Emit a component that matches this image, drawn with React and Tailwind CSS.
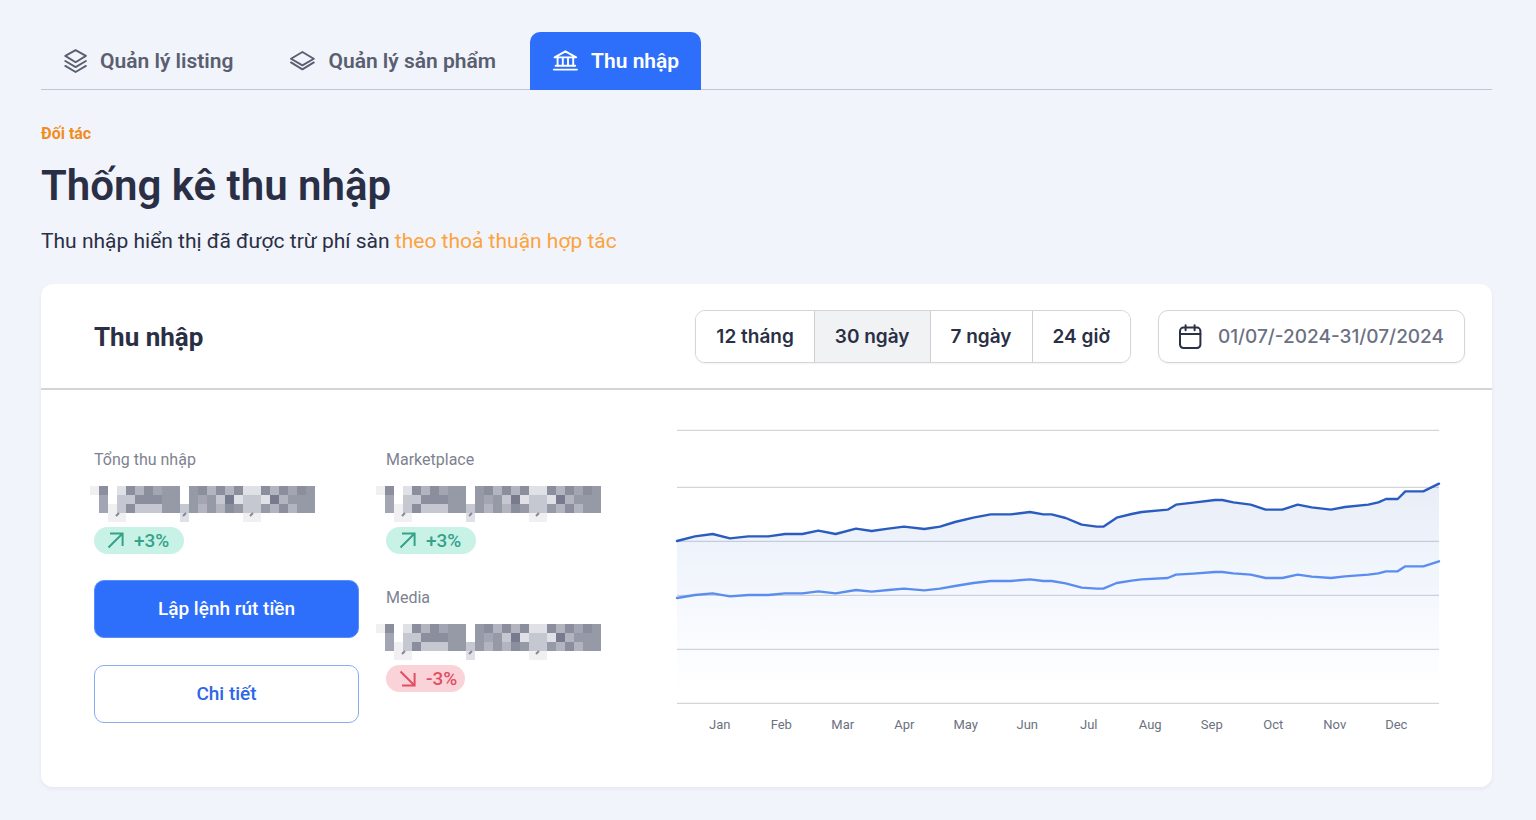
import { useState } from 'react';

const PERIODS = ['12 tháng', '30 ngày', '7 ngày', '24 giờ'];
const MONTHS = ['Jan', 'Feb', 'Mar', 'Apr', 'May', 'Jun', 'Jul', 'Aug', 'Sep', 'Oct', 'Nov', 'Dec'];

// Chart space is 2286 x 822 units, stretched to the available width
const CHART_W = 2286;
const CHART_H = 822;
const GRID_LINES = [1, 172, 334, 496, 658, 820];

const TOTAL = [
  [0, 333], [54, 319], [107, 312], [159, 325], [214, 319], [274, 319], [324, 312], [376, 312],
  [424, 302], [476, 312], [537, 296], [584, 303], [634, 296], [681, 290], [742, 297], [789, 290],
  [834, 276], [889, 263], [941, 253], [1001, 253], [1059, 246], [1099, 253], [1124, 253],
  [1166, 264], [1214, 284], [1259, 290], [1279, 290], [1319, 263], [1364, 252], [1394, 246],
  [1472, 239], [1497, 224], [1549, 218], [1614, 210], [1636, 210], [1669, 217], [1721, 224],
  [1766, 239], [1816, 239], [1862, 224], [1904, 232], [1962, 239], [2004, 231], [2074, 224],
  [2104, 217], [2127, 207], [2162, 207], [2185, 184], [2239, 184], [2286, 161],
];
const MARKETPLACE = TOTAL.map(([x, y]) => [x, Math.round(292 + y * 0.636)]);

const toPoints = (data) => data.map((p) => p.join(',')).join(' ');

// Hidden amounts: one letter per cell, from light (a) to dark (h)
const SHADES = {
  a: '#f0f0f2', b: '#e0e1e6', c: '#c6c8d1', d: '#b2b4bf',
  e: '#a3a6b2', f: '#969aa7', g: '#8b8e9c', h: '#787b8d',
};
const MASK = [
  'ag.bgdgeff.fgdgdgbbgdgegf',
  '.e.ccgggff.fefchbccbhdfff',
  '.eacgcccffcfdfdgfccfdgdff',
  '..aa......b......aa......',
];

function StackIcon() {
  return (
    <svg width="24" height="24" viewBox="0 0 24 24" fill="none" stroke="currentColor" strokeWidth="1.9" strokeLinejoin="round" strokeLinecap="round" aria-hidden="true">
      <path d="M12.6 1.2 22.9 6.9 12.6 13.2 2.3 6.9Z" />
      <path d="M2.3 12 12.6 18.1 22.9 12" />
      <path d="M2.3 16.9 12.6 23 22.9 16.9" />
    </svg>
  );
}

function LayerIcon() {
  return (
    <svg width="26" height="24" viewBox="0 0 26 24" fill="none" stroke="currentColor" strokeWidth="1.9" strokeLinejoin="round" strokeLinecap="round" aria-hidden="true">
      <path d="M13.4 3 24.8 9.8 13.4 16.4 2 9.8Z" />
      <path d="M2 13.4 13.4 20.4 24.8 13.4" />
    </svg>
  );
}

function BankIcon() {
  return (
    <svg width="26" height="24" viewBox="0 0 26 24" fill="none" stroke="currentColor" strokeWidth="1.9" strokeLinejoin="round" strokeLinecap="round" aria-hidden="true">
      <path d="M13.4 2.3 24.2 8.4H2.6Z" />
      <path d="M5.6 8.6v8M10.8 8.6v8M16 8.6v8M21.2 8.6v8" />
      <path d="M3.6 16.8h19.6M1.8 20.6h23.2" />
    </svg>
  );
}

function CalendarIcon() {
  return (
    <svg width="24" height="26" viewBox="0 0 24 26" fill="none" stroke="currentColor" strokeWidth="2" strokeLinejoin="round" strokeLinecap="round" aria-hidden="true">
      <rect x="1" y="3.6" width="20.4" height="20.4" rx="3.4" />
      <path d="M1 10h20.4M6.6 1.2v5M15.6 1.2v5" />
    </svg>
  );
}

function Badge({ value, down = false }) {
  return (
    <span
      className={`flex h-[27px] items-center gap-[10px] rounded-full pl-[13px] text-[19px] leading-6 font-medium ${
        down ? 'w-[79px] bg-[#f9d3d8] text-[#e04f64]' : 'w-[90px] bg-[#c9f2e7] text-[#35a28a]'
      }`}
    >
      <svg width="17" height="17" viewBox="0 0 17 17" fill="none" stroke="currentColor" strokeWidth="2" className="shrink-0" aria-hidden="true">
        <path d={down ? 'M1.5 1.5 15.3 15.3M3 15.6H15.6V3' : 'M1.5 15.5 15.3 1.7M3 1.4H15.6V14'} />
      </svg>
      {value}
    </span>
  );
}

function MaskedAmount() {
  return (
    <svg width="225" height="36" viewBox="0 0 225 36" shapeRendering="crispEdges" aria-hidden="true">
      {MASK.flatMap((row, y) =>
        [...row].map((c, x) =>
          c === '.' ? null : <rect key={`${x}-${y}`} x={x * 9} y={y * 9} width="9" height="9" fill={SHADES[c]} />
        )
      )}
      <path d="M26 30l3-3M93 30l3-3M160 30l3-3" stroke="#85889a" strokeWidth="2" shapeRendering="auto" />
    </svg>
  );
}

function Stat({ label, value, down, maskClass }) {
  return (
    <div>
      <p className="mb-[14px] text-base leading-6 text-[#7e8290]">{label}</p>
      <div className={`mb-[5px] h-9 ${maskClass}`}>
        <MaskedAmount />
      </div>
      <Badge value={value} down={down} />
    </div>
  );
}

function IncomeChart() {
  return (
    <div className="min-w-0 flex-1">
      <svg
        viewBox={`0 0 ${CHART_W} ${CHART_H}`}
        preserveAspectRatio="none"
        className="block h-[274px] w-full overflow-visible"
        role="img"
        aria-label="Thu nhập"
      >
        <defs>
          <linearGradient id="area" gradientUnits="userSpaceOnUse" x1="0" y1="161" x2="0" y2={CHART_H}>
            <stop offset="0" stopColor="#2a5cb4" stopOpacity="0.11" />
            <stop offset="0.45" stopColor="#3b74d8" stopOpacity="0.065" />
            <stop offset="0.95" stopColor="#5b8def" stopOpacity="0" />
          </linearGradient>
        </defs>
        {GRID_LINES.map((y) => (
          <line key={y} x1="0" x2={CHART_W} y1={y} y2={y} stroke="#d3d5da" strokeWidth="1.3" vectorEffect="non-scaling-stroke" />
        ))}
        <polygon points={`0,${CHART_H} ${toPoints(TOTAL)} ${CHART_W},${CHART_H}`} fill="url(#area)" />
        <polyline points={toPoints(MARKETPLACE)} fill="none" stroke="#5b8def" strokeWidth="2.4" strokeLinecap="round" strokeLinejoin="round" vectorEffect="non-scaling-stroke" />
        <polyline points={toPoints(TOTAL)} fill="none" stroke="#2a5cc0" strokeWidth="2.4" strokeLinecap="round" strokeLinejoin="round" vectorEffect="non-scaling-stroke" />
      </svg>
      <div className="mt-[11px] grid grid-cols-12 px-3 text-center text-[13px] leading-5 text-[#6b7180]">
        {MONTHS.map((month) => (
          <span key={month}>{month}</span>
        ))}
      </div>
    </div>
  );
}

const TABS = [
  { label: 'Quản lý listing', Icon: StackIcon },
  { label: 'Quản lý sản phẩm', Icon: LayerIcon },
  { label: 'Thu nhập', Icon: BankIcon },
];

export default function App() {
  const [tab, setTab] = useState('Thu nhập');
  const [period, setPeriod] = useState('30 ngày');

  return (
    <div className="min-h-screen bg-[#f1f4fb] pt-8 pr-11 pb-8 pl-[41px] font-[Roboto,sans-serif] text-[#2a2f45]">
      {/* Tabs */}
      <nav className="flex gap-3 bg-[linear-gradient(#c0c5d2,#c0c5d2)] bg-[length:100%_1px] bg-bottom bg-no-repeat">
        {TABS.map(({ label, Icon }) => (
          <button
            key={label}
            type="button"
            onClick={() => setTab(label)}
            className={`flex h-[58px] items-center gap-[13px] rounded-t-[10px] px-[22px] text-[21px] leading-7 font-semibold ${
              tab === label ? 'bg-[#2d6efa] text-white' : 'text-[#5a5f70]'
            }`}
          >
            <Icon />
            {label}
          </button>
        ))}
      </nav>

      {/* Heading */}
      <header className="pt-8">
        <p className="text-base leading-6 font-bold text-[#f28c1c]">Đối tác</p>
        <h1 className="mt-3 text-[42px] leading-[56px] font-semibold">Thống kê thu nhập</h1>
        <p className="mt-3 text-[21px] leading-[30px]">
          Thu nhập hiển thị đã được trừ phí sàn{' '}
          <a href="#terms" className="text-[#fda33c]">theo thoả thuận hợp tác</a>
        </p>
      </header>

      {/* Income card */}
      <section className="mt-7 rounded-xl bg-white shadow-[0_2px_4px_rgba(30,40,80,0.06)]">
        <div className="flex items-center border-b-2 border-[#d3d5d9] pt-[26px] pr-[27px] pb-[25px] pl-[53px]">
          <h2 className="flex-1 text-[26px] leading-8 font-bold">Thu nhập</h2>
          <div className="flex h-[53px] overflow-hidden rounded-[10px] border border-[#d3d5d9] font-['Inter',sans-serif] text-[19px] leading-7 font-semibold shadow-xs">
            {PERIODS.map((p) => (
              <button
                key={p}
                type="button"
                onClick={() => setPeriod(p)}
                className={`border-r border-[#cdcfd4] px-5 last:border-r-0 ${period === p ? 'bg-[#f0f2f4]' : 'bg-white'}`}
              >
                {p}
              </button>
            ))}
          </div>
          <button
            type="button"
            className="ml-[27px] flex h-[53px] items-center gap-[15px] rounded-[10px] border border-[#d3d5d9] px-5 font-['Inter',sans-serif] text-[19px] leading-7 font-medium text-[#6b7083] shadow-xs"
          >
            <span className="text-[#2a3145]">
              <CalendarIcon />
            </span>
            01/07/-2024-31/07/2024
          </button>
        </div>

        <div className="flex gap-[27px] pt-10 pr-[53px] pb-[52px] pl-[53px]">
          <div className="w-[265px] pt-[18px]">
            <Stat label="Tổng thu nhập" value="+3%" maskClass="-ml-1" />
            <div className="mt-[26px] flex flex-col gap-[27px] text-[19px] font-medium">
              <button type="button" className="h-[58px] rounded-[10px] border border-[#5b8df8] bg-[#2d6efa] text-white">
                Lập lệnh rút tiền
              </button>
              <button type="button" className="h-[58px] rounded-[10px] border border-[#8aabf2] bg-white text-[#2d66e8]">
                Chi tiết
              </button>
            </div>
          </div>
          <div className="flex w-[264px] flex-col gap-8 pt-[18px]">
            <Stat label="Marketplace" value="+3%" maskClass="-ml-[10px]" />
            <Stat label="Media" value="-3%" down maskClass="-ml-[10px]" />
          </div>
          <IncomeChart />
        </div>
      </section>
    </div>
  );
}
